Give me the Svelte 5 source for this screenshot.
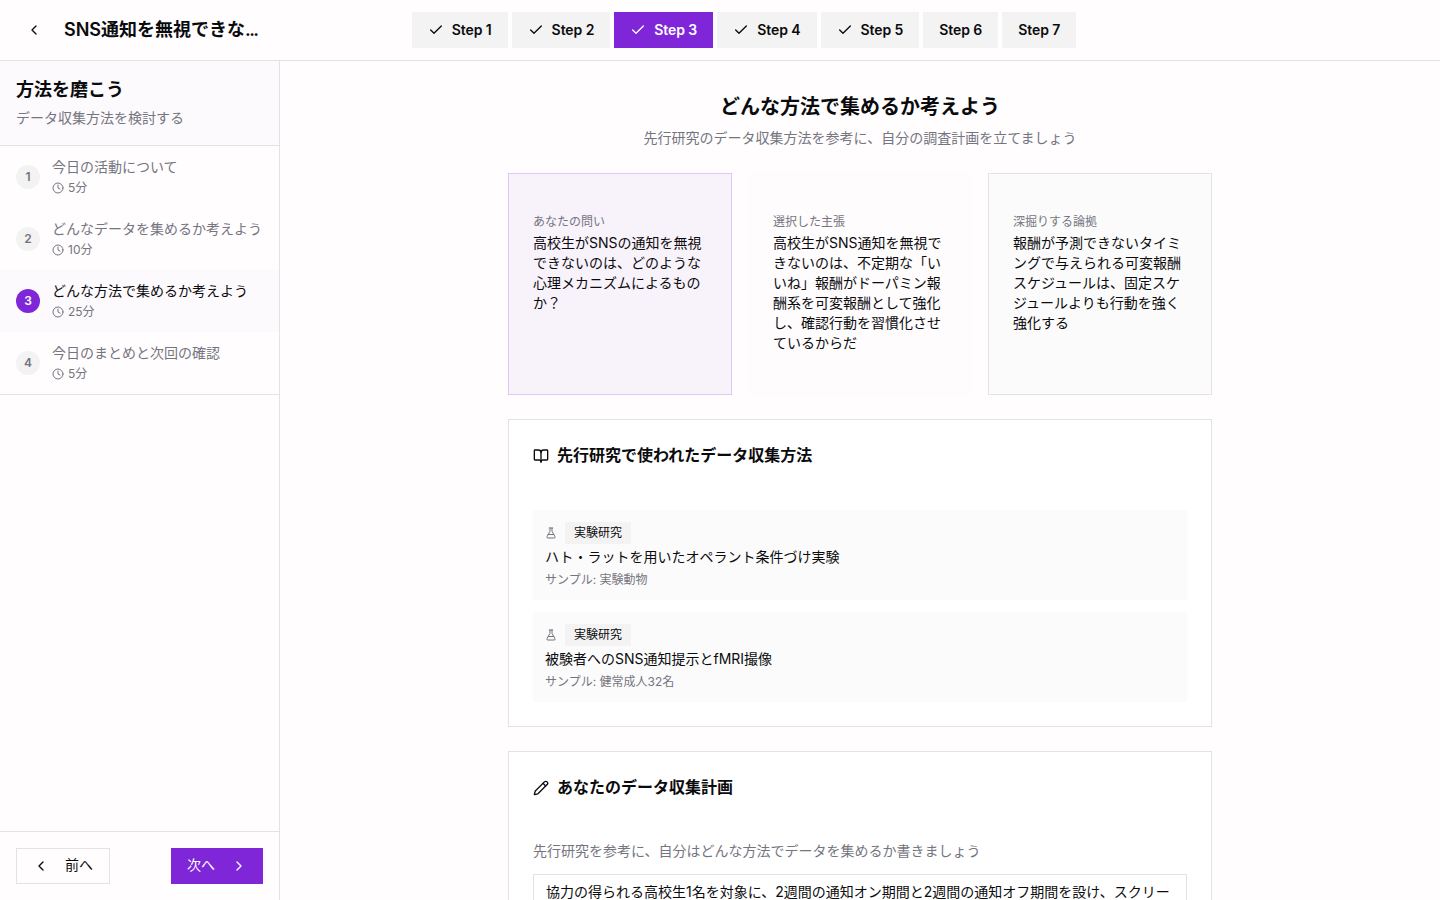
<script>
    const steps = [
        { label: "Step 1", done: true },
        { label: "Step 2", done: true },
        { label: "Step 3", done: true },
        { label: "Step 4", done: true },
        { label: "Step 5", done: true },
        { label: "Step 6", done: false },
        { label: "Step 7", done: false },
    ];
    const currentStep = "Step 3";

    const activities = [
        { title: "今日の活動について", minutes: 5 },
        { title: "どんなデータを集めるか考えよう", minutes: 10 },
        { title: "どんな方法で集めるか考えよう", minutes: 25 },
        { title: "今日のまとめと次回の確認", minutes: 5 },
    ];
    const currentActivity = 2;

    const contexts = [
        {
            kind: "question",
            label: "あなたの問い",
            text: "高校生がSNSの通知を無視できないのは、どのような心理メカニズムによるものか？",
        },
        {
            kind: "claim",
            label: "選択した主張",
            text: "高校生がSNS通知を無視できないのは、不定期な「いいね」報酬がドーパミン報酬系を可変報酬として強化し、確認行動を習慣化させているからだ",
        },
        {
            kind: "evidence",
            label: "深掘りする論拠",
            text: "報酬が予測できないタイミングで与えられる可変報酬スケジュールは、固定スケジュールよりも行動を強く強化する",
        },
    ];

    const studies = [
        { type: "実験研究", title: "ハト・ラットを用いたオペラント条件づけ実験", sample: "実験動物" },
        { type: "実験研究", title: "被験者へのSNS通知提示とfMRI撮像", sample: "健常成人32名" },
    ];

    const plan = "協力の得られる高校生1名を対象に、2週間の通知オン期間と2週間の通知オフ期間を設け、スクリー";
</script>

{#snippet icon(name, size = 16)}
    <svg
        class="icon"
        width={size}
        height={size}
        viewBox="0 0 24 24"
        fill="none"
        stroke="currentColor"
        stroke-width="2"
        stroke-linecap="round"
        stroke-linejoin="round"
        aria-hidden="true"
    >
        {#if name === "left"}
            <path d="m15 18-6-6 6-6" />
        {:else if name === "right"}
            <path d="m9 18 6-6-6-6" />
        {:else if name === "check"}
            <path d="M20 6 9 17l-5-5" />
        {:else if name === "clock"}
            <circle cx="12" cy="12" r="10" />
            <path d="M12 6v6l4 2" />
        {:else if name === "book"}
            <path d="M12 7v14" />
            <path d="M3 18a1 1 0 0 1-1-1V4a1 1 0 0 1 1-1h5a4 4 0 0 1 4 4 4 4 0 0 1 4-4h5a1 1 0 0 1 1 1v13a1 1 0 0 1-1 1h-6a3 3 0 0 0-3 3 3 3 0 0 0-3-3z" />
        {:else if name === "flask"}
            <path d="M14 2v6a2 2 0 0 0 .245.96l5.51 10.08A2 2 0 0 1 18 22H6a2 2 0 0 1-1.755-2.96l5.51-10.08A2 2 0 0 0 10 8V2" />
            <path d="M6.453 15h11.094" />
            <path d="M8.5 2h7" />
        {:else if name === "pencil"}
            <path d="M21.2 6.8a1 1 0 0 0-4-4L3.8 16.2a2 2 0 0 0-.5.8L2 21.4a.5.5 0 0 0 .6.6l4.4-1.3a2 2 0 0 0 .8-.5z" />
            <path d="m15 5 4 4" />
        {/if}
    </svg>
{/snippet}

<div class="app">
    <header class="topbar">
        <div class="project">
            <button class="back" aria-label="戻る">{@render icon("left")}</button>
            <span class="project-title">SNS通知を無視できな<span class="dots">...</span></span>
        </div>
        <nav class="steps">
            {#each steps as step}
                <button class="step" class:active={step.label === currentStep}>
                    {#if step.done}{@render icon("check")}{/if}
                    <span>{step.label}</span>
                </button>
            {/each}
        </nav>
    </header>

    <div class="body">
        <aside class="sidebar">
            <div class="sidebar-head">
                <h2>方法を磨こう</h2>
                <p>データ収集方法を検討する</p>
            </div>
            <ol class="activities">
                {#each activities as activity, i}
                    <li class="activity" class:current={i === currentActivity}>
                        <span class="number">{i + 1}</span>
                        <div>
                            <div class="activity-title">{activity.title}</div>
                            <div class="time">{@render icon("clock", 12)}{activity.minutes}分</div>
                        </div>
                    </li>
                {/each}
            </ol>
            <div class="pager">
                <button class="prev">{@render icon("left")}<span>前へ</span></button>
                <button class="next"><span>次へ</span>{@render icon("right")}</button>
            </div>
        </aside>

        <main>
            <div class="content">
                <div class="intro">
                    <h1>どんな方法で集めるか考えよう</h1>
                    <p>先行研究のデータ収集方法を参考に、自分の調査計画を立てましょう</p>
                </div>

                <div class="contexts">
                    {#each contexts as item}
                        <div class="context {item.kind}">
                            <div class="context-label">{item.label}</div>
                            <p>{item.text}</p>
                        </div>
                    {/each}
                </div>

                <section class="card">
                    <h3>{@render icon("book")}<span>先行研究で使われたデータ収集方法</span></h3>
                    <div class="studies">
                        {#each studies as study}
                            <div class="study">
                                <div class="study-type">
                                    {@render icon("flask", 12)}
                                    <span class="badge">{study.type}</span>
                                </div>
                                <div class="study-title">{study.title}</div>
                                <div class="sample">サンプル: {study.sample}</div>
                            </div>
                        {/each}
                    </div>
                </section>

                <section class="card">
                    <h3>{@render icon("pencil")}<span>あなたのデータ収集計画</span></h3>
                    <p class="hint">先行研究を参考に、自分はどんな方法でデータを集めるか書きましょう</p>
                    <div class="plan">{plan}</div>
                </section>
            </div>
        </main>
    </div>
</div>

<style>
    :global(body) {
        margin: 0;
        overflow: hidden;
    }

    .app {
        --background: #fffdfe;
        --border: #e3e3e5;
        --muted: #f3f3f3;
        --text: #0b0b0d;
        --text-muted: #757580;
        --primary: #7f26d9;
        display: flex;
        flex-direction: column;
        height: 100vh;
        background: var(--background);
        color: var(--text);
        font-family: Inter, "Noto Sans CJK JP", sans-serif;
        font-size: 14px;
        line-height: 20px;
        overflow: hidden;
    }

    .app * {
        box-sizing: border-box;
    }

    h1, h2, h3, p, ol {
        margin: 0;
        padding: 0;
    }

    button {
        display: flex;
        align-items: center;
        height: 36px;
        padding: 0 16px;
        border: 0;
        background: none;
        color: inherit;
        font: inherit;
        white-space: nowrap;
    }

    .icon {
        display: block;
        flex-shrink: 0;
    }

    .topbar {
        display: flex;
        align-items: center;
        flex-shrink: 0;
        height: 61px;
        padding-right: 232px;
        border-bottom: 1px solid var(--border);
    }

    .project {
        display: flex;
        align-items: center;
        gap: 12px;
        width: 280px;
        padding-left: 16px;
    }

    .back {
        justify-content: center;
        width: 36px;
        padding: 0;
    }

    .project-title {
        font-size: 18px;
        font-weight: 600;
        line-height: 28px;
        white-space: nowrap;
    }

    .dots {
        letter-spacing: -1.7px;
    }

    .steps {
        display: flex;
        flex: 1;
        justify-content: center;
        gap: 4px;
    }

    .step {
        gap: 8px;
        background: var(--muted);
        font-weight: 600;
        letter-spacing: -0.08px;
    }

    .step.active {
        background: var(--primary);
        color: #fff;
    }

    .body {
        display: flex;
        flex: 1;
        min-height: 0;
    }

    .sidebar {
        display: flex;
        flex-direction: column;
        flex-shrink: 0;
        width: 280px;
        border-right: 1px solid var(--border);
    }

    .sidebar-head {
        padding: 15px 16px 17px;
        border-bottom: 1px solid var(--border);
        background: #fcfafc;
    }

    .sidebar-head h2 {
        margin-bottom: 4px;
        font-size: 18px;
        font-weight: 600;
        line-height: 28px;
    }

    .sidebar-head p {
        color: var(--text-muted);
    }

    .activities {
        flex: 1;
        list-style: none;
    }

    .activity {
        display: flex;
        align-items: center;
        gap: 12px;
        height: 62px;
        padding: 0 16px;
        color: var(--text-muted);
        white-space: nowrap;
    }

    .activity:last-child {
        height: 63px;
        border-bottom: 1px solid var(--border);
    }

    .activity.current {
        background: #fcfafc;
    }

    .activity-title {
        margin: -1px 0 3px;
    }

    .current .activity-title {
        color: var(--text);
    }

    .number {
        display: flex;
        align-items: center;
        justify-content: center;
        width: 24px;
        height: 24px;
        border-radius: 50%;
        background: var(--muted);
        font-size: 12px;
        font-weight: 600;
    }

    .current .number {
        background: var(--primary);
        color: #fff;
    }

    .time {
        display: flex;
        align-items: center;
        gap: 4px;
        font-size: 12px;
        line-height: 16px;
    }

    .pager {
        display: flex;
        justify-content: space-between;
        padding: 16px;
        border-top: 1px solid var(--border);
    }

    .pager button {
        gap: 16px;
    }

    .pager span {
        padding-bottom: 2px;
    }

    .prev {
        border: 1px solid var(--border);
    }

    .next {
        background: var(--primary);
        color: #fff;
    }

    main {
        flex: 1;
        min-width: 0;
        padding-top: 32px;
        overflow: hidden;
    }

    .content {
        display: flex;
        flex-direction: column;
        gap: 24px;
        width: 704px;
        margin: 0 auto;
    }

    .intro {
        text-align: center;
    }

    .intro h1 {
        margin-bottom: 7px;
        font-size: 20px;
        font-weight: 600;
        line-height: 28px;
    }

    .intro p {
        padding-bottom: 1px;
        color: var(--text-muted);
    }

    .contexts {
        display: grid;
        grid-template-columns: repeat(3, 1fr);
        gap: 16px;
    }

    .context {
        padding: 40px 24px;
        border: 1px solid var(--border);
        background: #fbfbfb;
    }

    .context.question {
        border-color: #dfc8f4;
        background: #f8f2fb;
    }

    .context.claim {
        border-color: #fdfbfc;
        background: #fefcfd;
    }

    .context-label {
        margin-bottom: 3px;
        color: var(--text-muted);
        font-size: 12px;
        line-height: 16px;
    }

    .context p {
        padding-bottom: 1px;
    }

    .card {
        padding: 24px;
        border: 1px solid var(--border);
        background: #fff;
    }

    .card h3 {
        display: flex;
        align-items: center;
        gap: 8px;
        height: 24px;
        margin-bottom: 42px;
        font-size: 16px;
        font-weight: 600;
        line-height: 24px;
    }

    .card h3 span {
        padding-bottom: 2px;
    }

    .studies {
        display: grid;
        gap: 12px;
    }

    .study {
        padding: 12px;
        background: #fbfbfb;
    }

    .study-type {
        display: flex;
        align-items: center;
        gap: 8px;
        margin-bottom: 3px;
        color: var(--text-muted);
    }

    .badge {
        padding: 3px 9px;
        background: var(--muted);
        color: var(--text);
        font-size: 12px;
        line-height: 16px;
    }

    .study-title {
        margin-bottom: 5px;
    }

    .sample {
        color: var(--text-muted);
        font-size: 12px;
        line-height: 16px;
    }

    .hint {
        margin: -1px 0 13px;
        color: var(--text-muted);
    }

    .plan {
        min-height: 120px;
        padding: 7px 12px;
        border: 1px solid var(--border);
    }
</style>
